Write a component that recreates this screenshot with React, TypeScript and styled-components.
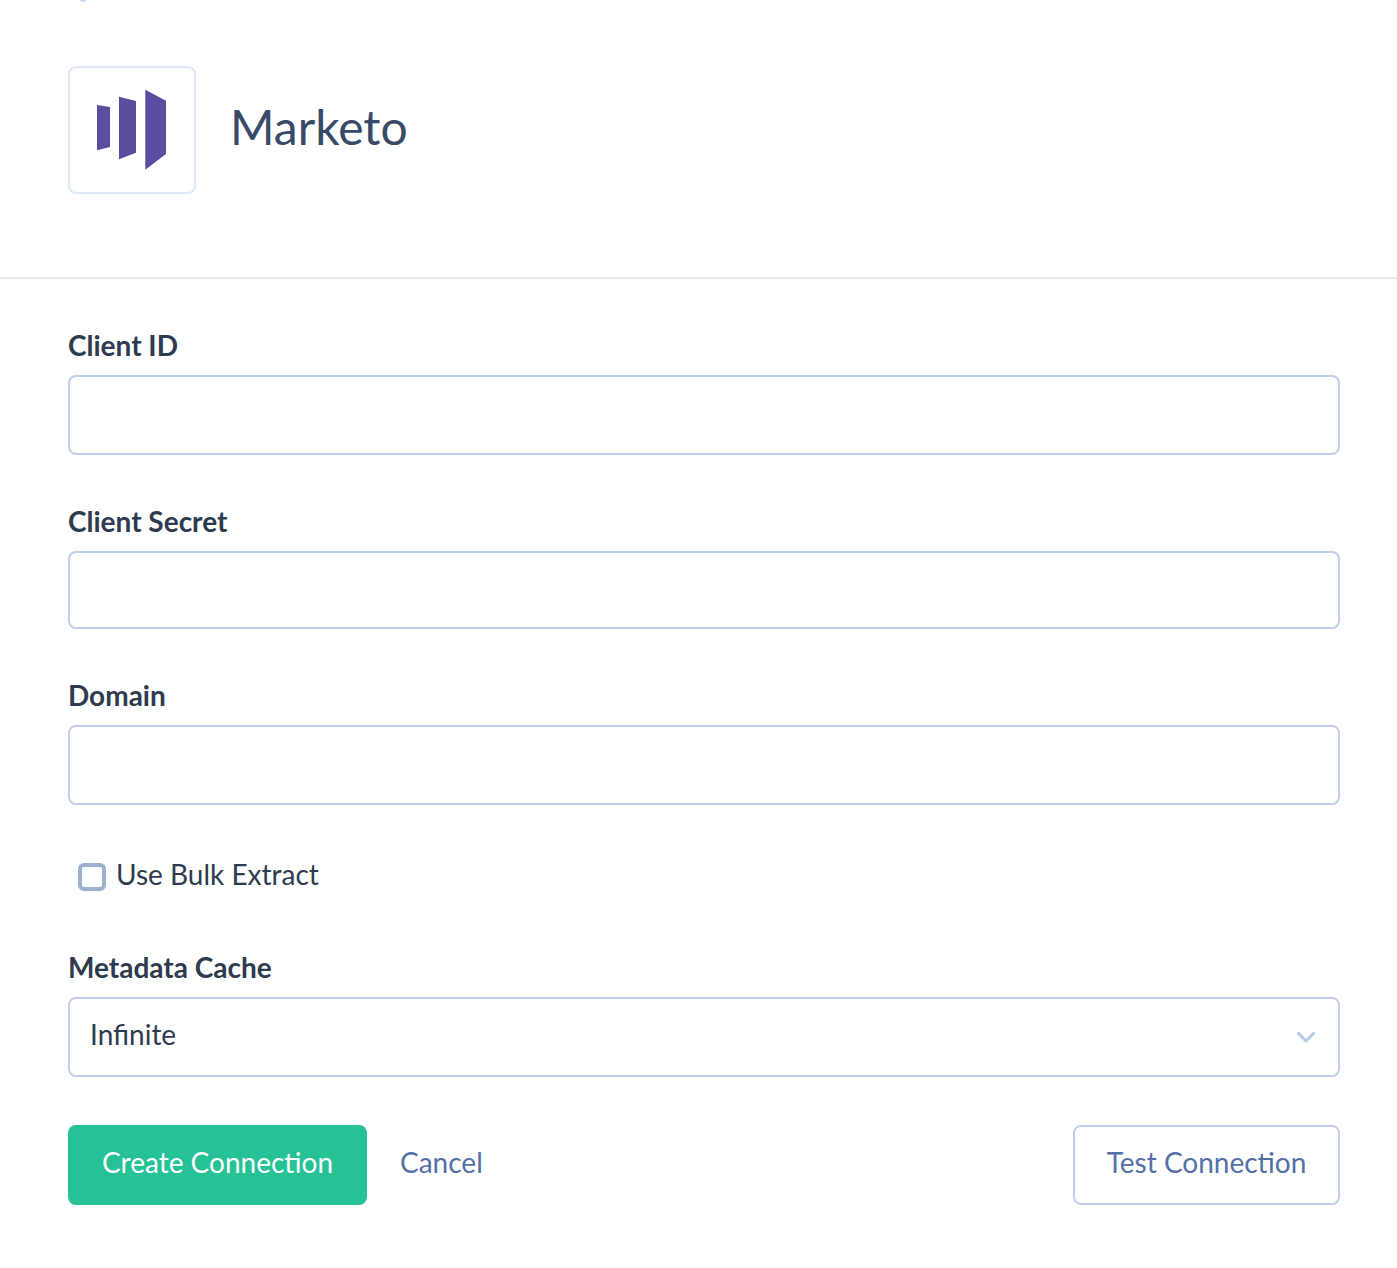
import React from "react";
import styled, { createGlobalStyle } from "styled-components";

const Global = createGlobalStyle`
  html, body { margin: 0; padding: 0; background: #fff; }
  body { font-family: Lato, "Liberation Sans", sans-serif; color: #2e3b4e; }
  * { box-sizing: border-box; }
`;

const Page = styled.div`
  position: relative;
  width: 1397px;
  height: 1268px;
  overflow: hidden;
`;

const CutOffMark = styled.div`
  position: absolute;
  left: 79px;
  top: -6px;
  width: 8px;
  height: 8px;
  border-radius: 50%;
  background: #c6d8f5;
`;

const Header = styled.header`
  display: flex;
  align-items: center;
  height: 279px;
  padding: 0 68px 18px;
  border-bottom: 2px solid #e6e9ed;
`;

const LogoBox = styled.div`
  display: flex;
  align-items: center;
  justify-content: center;
  width: 128px;
  height: 128px;
  background: #fff;
  border: 2px solid #e0e9fb;
  border-radius: 8px;
`;

const Title = styled.h1`
  margin: 0 0 6px 34px;
  font-size: 48px;
  font-weight: 400;
  line-height: 64px;
  color: #384a68;
`;

const Form = styled.form`
  display: flex;
  flex-direction: column;
  padding: 48px 57px 0 68px;
`;

const Field = styled.div<{ $after: number }>`
  display: flex;
  flex-direction: column;
  margin-bottom: ${(p) => p.$after}px;
`;

const Label = styled.label`
  font-size: 28px;
  font-weight: 700;
  line-height: 36px;
  height: 48px;
  color: #2e3b4e;
`;

const TextInput = styled.input<{ $h: number }>`
  display: block;
  width: 100%;
  height: ${(p) => p.$h}px;
  border: 2px solid #bfcfec;
  border-radius: 8px;
  background: #fff;
  outline: none;
`;

const CheckRow = styled.label`
  display: flex;
  align-items: center;
  gap: 10px;
  height: 40px;
  margin: 0 0 55px 10px;
  font-size: 28px;
  line-height: 40px;
  color: #2e3b4e;
`;

const Box = styled.span`
  display: block;
  width: 28px;
  height: 28px;
  margin-top: 6px;
  border: 4px solid #9fb0d0;
  border-radius: 6px;
  background: #fff;
`;

const SelectBox = styled.div`
  display: flex;
  align-items: center;
  justify-content: space-between;
  height: 80px;
  padding: 0 22px 6px 20px;
  border: 2px solid #bfcfec;
  border-radius: 8px;
  font-size: 28px;
  color: #2e3b4e;
`;

const Chevron = styled.svg`
  width: 20px;
  height: 12px;
  margin-top: 6px;
`;

const Actions = styled.div`
  display: flex;
  align-items: center;
  margin-top: 48px;
`;

const PrimaryButton = styled.button`
  width: 299px;
  height: 80px;
  padding: 0 0 6px;
  border: none;
  border-radius: 8px;
  background: #26c296;
  color: #fff;
  font: 400 28px Lato, sans-serif;
`;

const CancelLink = styled.a`
  margin: 0 auto 6px 33px;
  font-size: 28px;
  color: #5470a6;
`;

const OutlineButton = styled.button`
  width: 267px;
  height: 80px;
  padding: 0 0 6px;
  border: 2px solid #bfcfec;
  border-radius: 8px;
  background: #fff;
  color: #5470a6;
  font: 400 28px Lato, sans-serif;
`;

export default function App() {
  return (
    <Page>
      <Global />
      <CutOffMark />
      <Header>
        <LogoBox>
          <svg width="72" height="82" viewBox="0 0 72 82">
            <path
              fill="#5c4c9f"
              d="M1 16l13 2v40l-13 3.300zM23 7.700l17 4.300v51.700l-17 6.600zM49.300 0.700l20.700 11v53.300l-20.700 15.700z"
            />
          </svg>
        </LogoBox>
        <Title>Marketo</Title>
      </Header>
      <Form>
        <Field $after={48}>
          <Label>Client ID</Label>
          <TextInput $h={80} />
        </Field>
        <Field $after={48}>
          <Label>Client Secret</Label>
          <TextInput $h={78} />
        </Field>
        <Field $after={49}>
          <Label>Domain</Label>
          <TextInput $h={80} />
        </Field>
        <CheckRow>
          <Box />
          Use Bulk Extract
        </CheckRow>
        <Field $after={0}>
          <Label>Metadata Cache</Label>
          <SelectBox>
            Infinite
            <Chevron viewBox="0 0 20 12">
              <path d="M1.500 1.500L10 10l8.500-8.500" fill="none" stroke="#b7c9e8" strokeWidth="3" />
            </Chevron>
          </SelectBox>
        </Field>
        <Actions>
          <PrimaryButton type="button">Create Connection</PrimaryButton>
          <CancelLink>Cancel</CancelLink>
          <OutlineButton type="button">Test Connection</OutlineButton>
        </Actions>
      </Form>
    </Page>
  );
}
